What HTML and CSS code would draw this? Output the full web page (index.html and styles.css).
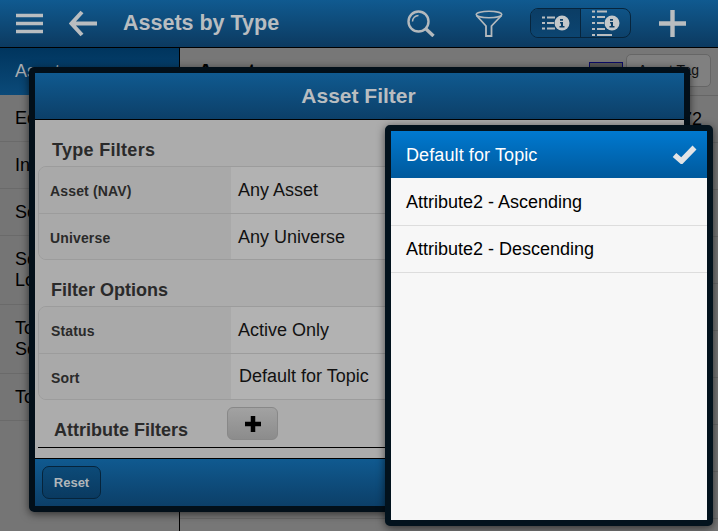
FILE: index.html
```html
<!DOCTYPE html>
<html lang="en">
<head>
    <meta charset="UTF-8">
    <meta name="viewport" content="width=device-width, initial-scale=1.0">
    <link rel="stylesheet" href="styles.css">
    <title>Assets by Type</title>
</head>

<body>
    <div class="app">
        <header class="topbar">
            <svg class="icon menu-icon" width="27" height="21" viewBox="0 0 27 21">
                <path d="M0 2.500H27M0 10.500H27M0 18.500H27" stroke="#b9bdc0" stroke-width="3.400" fill="none"/>
            </svg>
            <svg class="icon back-icon" width="28" height="27" viewBox="0 0 28 27">
                <path d="M13 2L2.500 13.500L13 25M3 13.500H28" stroke="#b9bdc0" stroke-width="4" fill="none"/>
            </svg>
            <span class="topbar-title">Assets by Type</span>
            <svg class="icon search-icon" width="28" height="27" viewBox="0 0 28 27">
                <circle cx="11.500" cy="11.500" r="10" stroke="#b4b9bd" stroke-width="2.400" fill="none"/>
                <path d="M5.500 11.500A6 6 0 0 1 11.500 5.500" stroke="#b4b9bd" stroke-width="1.500" fill="none"/>
                <path d="M18.500 18.500L26.500 26" stroke="#b4b9bd" stroke-width="3.400" fill="none"/>
            </svg>
            <svg class="icon funnel-icon" width="28" height="27" viewBox="0 0 28 27">
                <ellipse cx="14" cy="4.500" rx="12.800" ry="3.300" stroke="#b4b9bd" stroke-width="1.600" fill="none"/>
                <path d="M1.500 5.500L11 16V26H16.500V16L26.500 5.500" stroke="#b4b9bd" stroke-width="1.800" fill="none"/>
            </svg>
            <div class="view-switch">
                <div class="view-btn view-btn-on">
                    <svg width="28" height="16" viewBox="0 0 28 16">
                        <path d="M0 2.500H3M5 2.500H13M0 8H3M5 8H12M0 13.500H3M5 13.500H13" stroke="#b9bdc0" stroke-width="2" fill="none"/>
                        <circle cx="20" cy="8" r="7.500" fill="#c4c8ca"/>
                        <path d="M18 4H21V5.800H18ZM18 7H21V11H22.500V12.500H17.500V11H19V8.500H18Z" fill="#0c3f67"/>
                    </svg>
                </div>
                <div class="view-btn">
                    <svg width="28" height="28" viewBox="0 0 28 28">
                        <path d="M0 2.500H3M5 2.500H15M0 8H3M5 8H13M0 14H3M5 14H12M0 20H3M5 20H13M0 26H3M5 26H20" stroke="#b9bdc0" stroke-width="2" fill="none"/>
                        <circle cx="20" cy="14" r="7.500" fill="#c4c8ca"/>
                        <path d="M18 10H21V11.800H18ZM18 13H21V17H22.500V18.500H17.500V17H19V14.500H18Z" fill="#0c3f67"/>
                    </svg>
                </div>
            </div>
            <svg class="icon plus-icon" width="27" height="27" viewBox="0 0 27 27">
                <path d="M13.500 0V27M0 13.500H27" stroke="#b9bdc0" stroke-width="4.400" fill="none"/>
            </svg>
        </header>

        <div class="main">
            <nav class="sidebar">
                <div class="side-item side-item-on">Assets</div>
                <div class="side-item">Equities</div>
                <div class="side-item">Indices</div>
                <div class="side-item">Sectors</div>
                <div class="side-item">Sector<br>Lookup</div>
                <div class="side-item">Topic<br>Search</div>
                <div class="side-item">Tools</div>
            </nav>
            <section class="content">
                <div class="content-head">
                    <h2>Assets</h2>
                    <span class="swatch"></span>
                    <span class="tag-btn">Asset Tag</span>
                </div>
                <div class="content-row">72</div>
                <div class="content-row"></div>
                <div class="content-row"></div>
                <div class="content-row"></div>
                <div class="content-row"></div>
                <div class="content-row"></div>
                <div class="content-row"></div>
                <div class="content-row"></div>
                <div class="content-row"></div>
            </section>
        </div>
    </div>

    <div class="modal">
        <div class="modal-head">Asset Filter</div>
        <div class="modal-body">
            <h3 class="section-title section-title-type">Type Filters</h3>
            <div class="field-group">
                <div class="field">
                    <div class="field-label">Asset (NAV)</div>
                    <div class="field-value">Any Asset</div>
                </div>
                <div class="field">
                    <div class="field-label">Universe</div>
                    <div class="field-value">Any Universe</div>
                </div>
            </div>
            <h3 class="section-title section-title-options">Filter Options</h3>
            <div class="field-group field-group-options">
                <div class="field">
                    <div class="field-label">Status</div>
                    <div class="field-value">Active Only</div>
                </div>
                <div class="field">
                    <div class="field-label">Sort</div>
                    <div class="field-value field-value-sort">Default for Topic</div>
                </div>
            </div>
            <div class="attr-head">
                <h3 class="attr-title">Attribute Filters</h3>
                <div class="add-btn">
                    <svg width="18" height="16" viewBox="0 0 18 16">
                        <path d="M9 0V16M1 8H17" stroke="#000" stroke-width="4.500" fill="none"/>
                    </svg>
                </div>
            </div>
        </div>
        <div class="modal-foot">
            <div class="reset-btn">Reset</div>
        </div>
    </div>

    <div class="popup">
        <div class="option option-on">
            Default for Topic
            <svg width="25" height="19" viewBox="0 0 25 19">
                <path d="M2.500 10L9.500 16L22.500 2.500" stroke="#e2e4e6" stroke-width="5.500" fill="none"/>
            </svg>
        </div>
        <div class="option option-first">Attribute2 - Ascending</div>
        <div class="option">Attribute2 - Descending</div>
    </div>
</body>

</html>
```

FILE: styles.css
```css
body {
    font-family: 'Liberation Sans', Arial, sans-serif;
    margin: 0;
    padding: 0;
    background-color: #777777;
    overflow: hidden;
}

h2,
h3 {
    margin: 0;
}

.app {
    width: 718px;
    height: 531px;
    display: flex;
    flex-direction: column;
    overflow: hidden;
}

.topbar {
    height: 47px;
    flex: none;
    display: flex;
    align-items: center;
    background: linear-gradient(#105a90, #0c3a60);
    border-bottom: 1px solid #000000;
}

.icon {
    flex: none;
}

.menu-icon {
    margin-left: 16px;
}

.back-icon {
    margin-left: 26px;
}

.topbar-title {
    margin-left: 26px;
    width: 284px;
    font-size: 21.500px;
    font-weight: bold;
    color: #b9bdc0;
}

.funnel-icon {
    margin-left: 40px;
}

.view-switch {
    margin-left: 27px;
    margin-bottom: 1px;
    width: 99px;
    height: 28px;
    display: flex;
    border: 1px solid #07253d;
    border-radius: 8px;
    overflow: hidden;
}

.view-btn {
    width: 50px;
    display: flex;
    align-items: center;
    justify-content: center;
}

.view-btn-on {
    background: linear-gradient(#0b3d65, #0c4571);
    border-right: 1px solid #07253d;
}

.plus-icon {
    margin-left: 28px;
}

.main {
    flex: 1;
    display: flex;
    min-height: 0;
}

.sidebar {
    width: 179px;
    flex: none;
    border-right: 1px solid #000000;
    background-color: #757575;
    color: #000000;
    font-size: 18px;
}

.side-item {
    padding: 13px 15px 12px;
    line-height: 21px;
    border-bottom: 1px solid #6a6a6a;
    height: 21px;
}

.side-item:nth-child(5),
.side-item:nth-child(6) {
    height: 43px;
}

.side-item-on {
    height: 22px;
    background: linear-gradient(#00355e, #0b4a79);
    color: #a8acb0;
    border-bottom: none;
}

.content {
    flex: 1;
    background-color: #777777;
}

.content-head {
    height: 45px;
    display: flex;
    align-items: center;
    padding: 0 7px 2px 18px;
    border-bottom: 1px solid #666666;
}

.content-head h2 {
    flex: 1;
    font-size: 21px;
    color: #000000;
}

.swatch {
    width: 32px;
    height: 15px;
    margin: 0 3px 0 0;
    background-color: #555555;
    border: 1px solid #0b0b66;
}

.tag-btn {
    width: 83px;
    height: 31px;
    line-height: 31px;
    text-align: center;
    font-size: 14px;
    color: #111111;
    background-color: #808080;
    border: 1px solid #666666;
    border-radius: 5px;
}

.content-row {
    height: 46px;
    line-height: 46px;
    padding-right: 16px;
    text-align: right;
    font-size: 18px;
    color: #000000;
    border-bottom: 1px solid #6a6a6a;
}

.modal {
    position: absolute;
    left: 29px;
    top: 67px;
    width: 649px;
    height: 433px;
    display: flex;
    flex-direction: column;
    border: 6px solid #020f19;
    border-radius: 5px;
    box-shadow: 0 2px 8px rgba(0, 0, 0, 0.6);
}

.modal-head {
    height: 46px;
    flex: none;
    line-height: 46px;
    padding-right: 2px;
    text-align: center;
    font-size: 21px;
    font-weight: bold;
    color: #b9bdc0;
    background: linear-gradient(#105a90, #0c3f68);
    border-bottom: 1px solid #000000;
}

.modal-body {
    flex: 1;
    background-color: #acacac;
    padding: 0 3px;
    color: #2a2a2a;
}

.section-title {
    font-size: 18px;
    line-height: 20px;
}

.section-title-type {
    margin: 20px 0 6px 14px;
    letter-spacing: 0.300px;
}

.section-title-options {
    margin: 20px 0 6px 13px;
}

.field-group {
    border: 1px solid #9c9c9c;
    border-radius: 8px;
    overflow: hidden;
}

.field {
    display: flex;
    height: 46px;
}

.field + .field {
    height: 45px;
    border-top: 1px solid #9c9c9c;
}

.field-label {
    width: 192px;
    flex: none;
    padding-left: 11px;
    box-sizing: border-box;
    line-height: 48px;
    font-size: 14px;
    font-weight: bold;
    letter-spacing: 0.150px;
    background-color: #a9a9a9;
}

.field-group-options .field-label {
    padding-left: 12px;
}

.field-value {
    flex: 1;
    padding-left: 7px;
    line-height: 46px;
    font-size: 18px;
    color: #111111;
    background-color: #b2b2b2;
}

.field-group-options .field-value-sort {
    padding-left: 8px;
    line-height: 44px;
}

.attr-head {
    display: flex;
    align-items: flex-start;
    height: 40px;
    margin-top: 7px;
    border-bottom: 1px solid #000000;
}

.attr-title {
    width: 173px;
    padding: 13px 0 0 16px;
    font-size: 18px;
    line-height: 21px;
    flex: none;
}

.add-btn {
    width: 49px;
    height: 31px;
    display: flex;
    align-items: center;
    justify-content: center;
    background: linear-gradient(#a2a2a2, #8c8c8c);
    border: 1px solid #888888;
    border-radius: 6px;
}

.modal-foot {
    height: 47px;
    flex: none;
    display: flex;
    align-items: center;
    padding-left: 7px;
    background: linear-gradient(#105a90, #0c3f68);
    border-top: 1px solid #000000;
}

.reset-btn {
    width: 57px;
    height: 31px;
    line-height: 31px;
    text-align: center;
    font-size: 13px;
    font-weight: bold;
    color: #b0b6ba;
    background: linear-gradient(#0c4a78, #0a3a60);
    border: 1px solid #06243b;
    border-radius: 7px;
}

.popup {
    position: absolute;
    left: 385px;
    top: 125px;
    width: 316px;
    height: 389px;
    border: 6px solid #02121d;
    border-radius: 5px;
    background-color: #f7f7f7;
    box-shadow: 0 2px 8px rgba(0, 0, 0, 0.6);
}

.option {
    height: 46px;
    line-height: 46px;
    padding: 0 10px 0 15px;
    font-size: 18px;
    color: #000000;
    border-bottom: 1px solid #dddddd;
    display: flex;
    align-items: center;
    justify-content: space-between;
}

.option-first {
    height: 47px;
}

.option-on {
    height: 47px;
    letter-spacing: 0.100px;
    color: #ffffff;
    background: linear-gradient(#0079d0, #00599c);
    border-bottom: none;
}
```
